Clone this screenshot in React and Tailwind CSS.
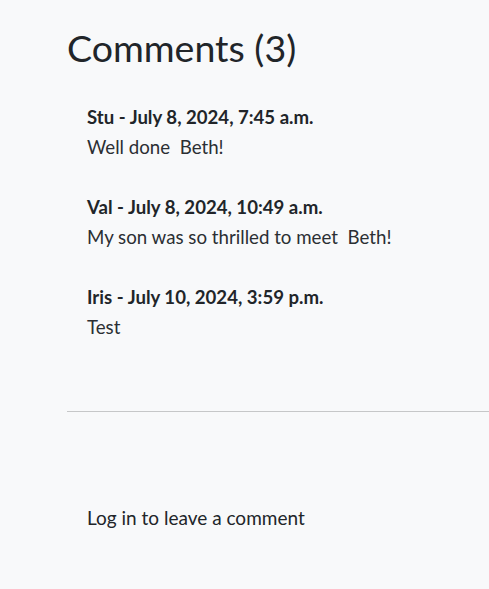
import React from 'react';

const comments = [
  { author: 'Stu', date: 'July 8, 2024, 7:45 a.m.', body: 'Well done\u00a0 Beth!' },
  { author: 'Val', date: 'July 8, 2024, 10:49 a.m.', body: 'My son was so thrilled to meet\u00a0 Beth!' },
  { author: 'Iris', date: 'July 10, 2024, 3:59 p.m.', body: 'Test' },
];

export default function App() {
  return (
    <div className="min-h-[589px] bg-[#f8f9fa] text-[#212529] font-['Lato',sans-serif] pl-[67px] pt-[24px]">
      {/* heading */}
      <h1 className="text-[37.5px] leading-[48px] font-normal">Comments (3)</h1>

      {/* comment list */}
      <div className="pl-[20px] pt-[30px] flex flex-col gap-[30px]">
        {comments.map((c) => (
          <div key={c.author}>
            <p className="text-[18.6px] leading-[30px] font-bold">
              {c.author} - {c.date}
            </p>
            <p className="text-[18.7px] leading-[30px] text-[#2b2f33]">{c.body}</p>
          </div>
        ))}
      </div>

      <hr className="mt-[69px] border-0 border-t border-[#c6c7c8]" />

      <div className="pl-[20px] pt-[91px]">
        <p className="text-[19px] leading-[30px]">Log in to leave a comment</p>
      </div>
    </div>
  );
}
